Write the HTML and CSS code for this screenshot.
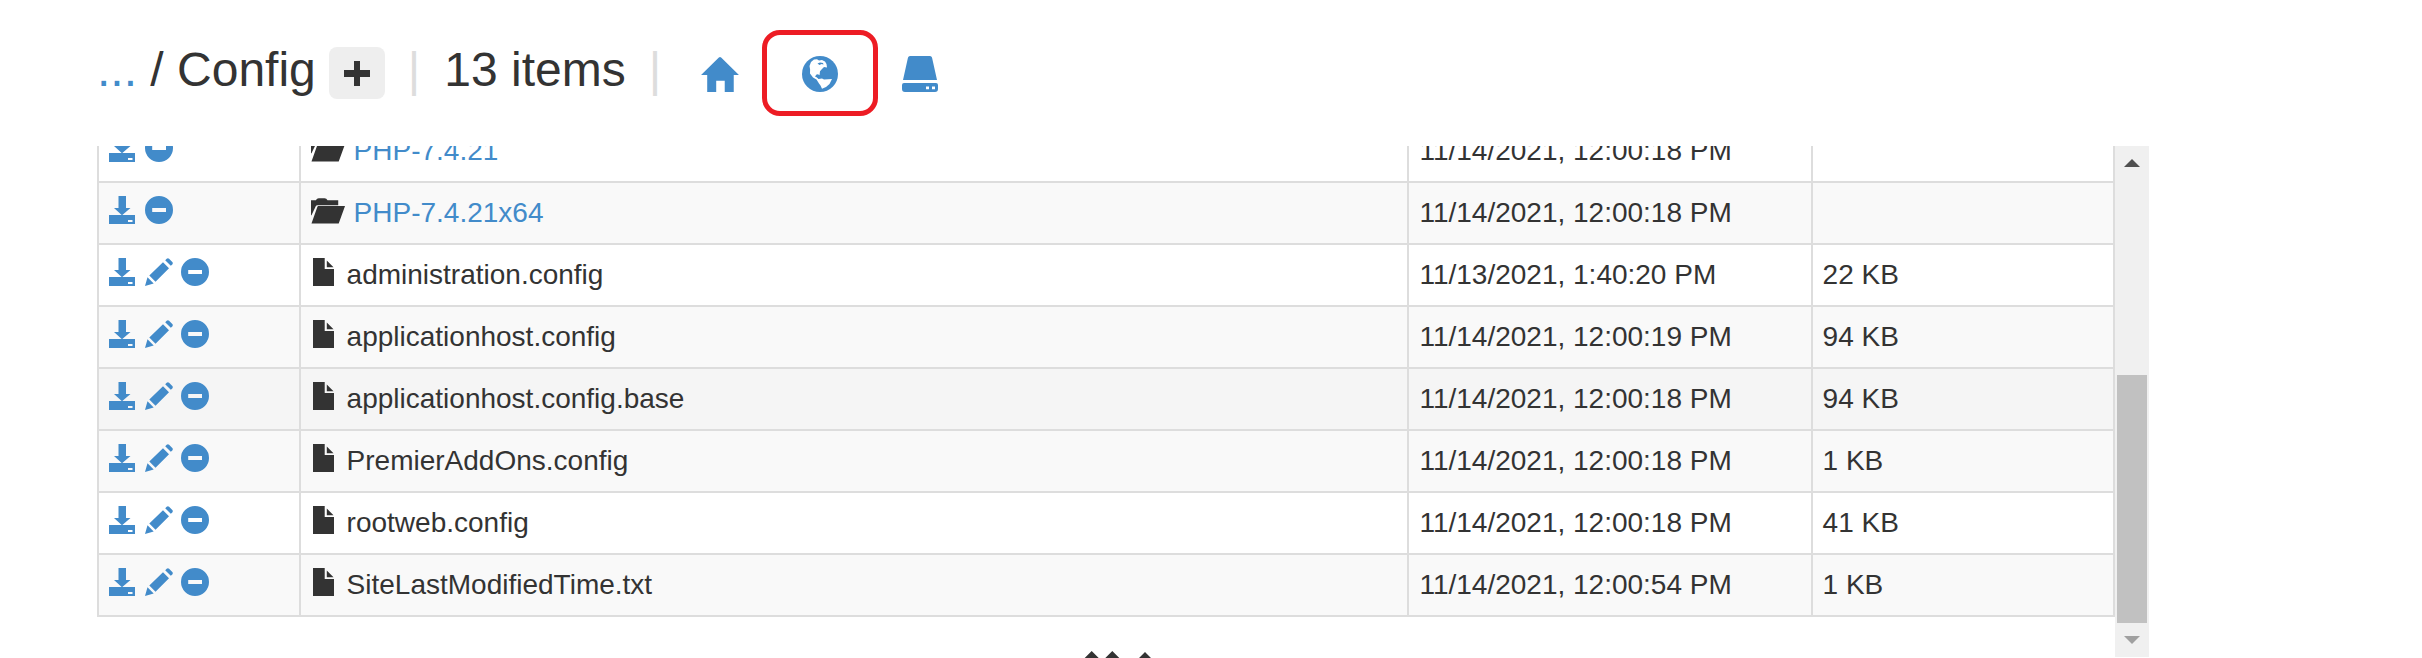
FILE: index.html
```
<!DOCTYPE html>
<html lang="en">
<head>
    <meta charset="UTF-8">
    <meta name="viewport" content="width=device-width, initial-scale=1.0">
    <title>Config</title>
    <link rel="stylesheet" href="styles.css">
</head>
<body>
    <svg class="sprite" aria-hidden="true">
        <symbol id="save" viewBox="0 0 28 28">
            <path fill-rule="evenodd" d="M9.5 0h7.5v12h4.5L13.3 19H26v9H0v-9h12.7L5 12h4.500zM19 24v2h4.500v-2z"/>
        </symbol>
        <symbol id="pencil" viewBox="0 0 28 28">
            <path d="M18 4.200l6 6L10.500 23.700l-6.200-6.200zM2.500 19.200l6.200 6.200L0 28zM20.200 2.200L21.700.8q1.200-1 2.400 0l3.200 3.200q1 1.200 0 2.400L25.800 7.800z"/>
        </symbol>
        <symbol id="minus" viewBox="0 0 28 28">
            <path fill-rule="evenodd" d="M14 0a14 14 0 1 1 0 28a14 14 0 1 1 0-28zM7.200 12v4H21v-4z"/>
        </symbol>
        <symbol id="folder" viewBox="0 0 36 28">
            <path d="M0 4h5q1-2 3-2h6q2 0 3 2h11v5H6.500q-1 0-1.500 1L.5 19.500H0zM7.500 10H35l-6.500 18H.5L6.500 11q.4-1 1-1z"/>
        </symbol>
        <symbol id="file" viewBox="0 0 28 28">
            <path d="M2 0h11.700v11H23v17H2zM15.800 2.500l6.700 6.700h-6.700z"/>
        </symbol>
        <symbol id="plus" viewBox="0 0 28 28">
            <path d="M11 2h6v9h10v7H17v9h-6v-9H1v-7h10z"/>
        </symbol>
        <symbol id="home" viewBox="0 0 40 38">
            <path d="M18.800 1.500q1.200-1 2.400 0L40 20h-5.500v18H25V26h-9v12H6.500V20H0z"/>
        </symbol>
        <symbol id="globe" viewBox="0 0 36 36">
            <circle cx="18" cy="18" r="18"/>
            <path class="land" d="M7.500 10L9 6l3-2.500 3-.3 2 1.300 3-.5 3 1.500L24.500 8l.5 3.500-3-.5-2.500 2.500-1.500 1.700-.5 4-1.500-1-1.500.3-1.500 2 2 1 1.500 1.500 3.500-.5 2 1 8-.5-2.500 5-3.500 3-4 1.800-1.500-3.300-1.500-2-2.500-4-3.500-2-3-4 .1-4z"/>
            <path d="M15.500 7.500l2.500-1 3 .5.500 1.500-2-.5-2 1zM15 19l1.500 1 .3 2.500-1.500-1z"/>
        </symbol>
        <symbol id="drive" viewBox="0 0 36 36">
            <path fill-rule="evenodd" d="M8 0h20q1.500 0 2 1.500L35 24H1L6 1.500Q6.500 0 8 0zM2 27h32q2 0 2 2v4q0 3-3 3H3q-3 0-3-3v-4q0-2 2-2zM24 30.500v2.700h3v-2.700zM30 30.500v2.700h3v-2.700z"/>
        </symbol>
        <symbol id="down" viewBox="0 0 36 28">
            <path d="M7.700 0L18 10.300 28.300 0 36 7.700 18 25.700 0 7.700z"/>
        </symbol>
        <symbol id="up" viewBox="0 0 36 28">
            <path d="M18 1l18 18-7.700 7.700L18 16.400 7.700 26.700 0 19z"/>
        </symbol>
    </svg>

    <header class="top">
        <h1 class="path"><a href="#">...</a> / Config</h1>
        <button class="add" type="button" aria-label="New"><svg><use href="#plus"/></svg></button>
        <span class="bar">|</span>
        <span class="count">13 items</span>
        <span class="bar">|</span>
        <nav class="places">
            <a href="#" aria-label="Home"><svg class="icon-home"><use href="#home"/></svg></a>
            <a href="#" class="marked" aria-label="Site root"><svg><use href="#globe"/></svg></a>
            <a href="#" aria-label="Drive"><svg><use href="#drive"/></svg></a>
        </nav>
    </header>

    <main class="pane">
        <div class="content">
            <div class="list">
                <table class="files">
                    <colgroup>
                        <col class="col-act">
                        <col class="col-name">
                        <col class="col-date">
                        <col class="col-size">
                    </colgroup>
                    <tbody id="rows"></tbody>
                </table>
            </div>
            <div class="resize">
                <button type="button" aria-label="Expand"><svg><use href="#down"/></svg></button>
                <button type="button" aria-label="Collapse"><svg><use href="#up"/></svg></button>
            </div>
        </div>
        <div class="scroll">
            <button class="arrow arrow-up" type="button" aria-label="Scroll up"></button>
            <div class="track"><div class="thumb"></div></div>
            <button class="arrow arrow-down" type="button" aria-label="Scroll down"></button>
        </div>
    </main>

    <script src="script.js"></script>
</body>
</html>
```
FILE: styles.css
```
*{box-sizing: border-box;}
body{
    display: flex;
    flex-direction: column;
    height: 100vh;
    margin: 0;
    padding: 0 273px 0 97px;
    overflow: hidden;
    font: 28px/40px "Liberation Sans", Arial, sans-serif;
    color: #333;
    background: #fff;
}
a{
    color: #428bca;
    text-decoration: none;
}
svg{fill: currentColor;}
button{
    padding: 0;
    border: none;
    color: inherit;
    background: none;
    cursor: pointer;
}
.sprite{
    position: absolute;
    width: 0;
    height: 0;
}

/* header */
.top{
    display: flex;
    flex: none;
    align-items: center;
    height: 146px;
    padding-bottom: 6px;
    font-size: 48px;
    line-height: 52px;
}
.path{
    margin: 0 13px 0 0;
    font-size: 48px;
    font-weight: normal;
}
.add{
    display: flex;
    align-items: center;
    justify-content: center;
    width: 56px;
    height: 52px;
    margin-top: 6px;
    border-radius: 8px;
    background: #eee;
}
.add svg{
    width: 28px;
    height: 28px;
}
.bar{
    margin: 0 24px 0 23px;
    color: #ddd;
}
.places{
    display: flex;
    margin-left: -15px;
}
.places a{
    position: relative;
    display: flex;
    align-items: center;
    justify-content: center;
    width: 100px;
    height: 52px;
    margin-top: 8px;
}
.places svg{
    width: 36px;
    height: 36px;
}
.places .icon-home{
    width: 38px;
}
.marked::after{
    content: "";
    position: absolute;
    inset: -18px -8px -16px;
    border: 5px solid #ed1c24;
    border-radius: 18px;
}
.land{fill: #fff;}

/* file list */
.pane{
    display: flex;
    flex: 1;
    min-height: 0;
}
.content{
    display: flex;
    flex: 1;
    flex-direction: column;
    min-width: 0;
}
.list{
    display: flex;
    flex: 1;
    align-items: flex-end;
    min-height: 0;
    padding-bottom: 34px;
    overflow: hidden;
}
.files{
    width: 100%;
    table-layout: fixed;
    border-collapse: collapse;
}
.files td{
    height: 62px;
    padding: 10px;
    border: 2px solid #ddd;
    white-space: nowrap;
}
.files tr:nth-child(even){background: #f9f9f9;}
.files tr.hover{background: #f5f5f5;}
.col-act{width: 10%;}
.col-name{width: 55%;}
.col-date{width: 20%;}
.col-size{width: 15%;}
.cell{
    display: flex;
    gap: 8px;
    height: 40px;
}
.cell svg{
    display: block;
    width: 28px;
    height: 28px;
    margin-top: 3px;
}
.cell .icon-folder{width: 35px;}

.resize{
    display: flex;
    flex: none;
    justify-content: center;
    gap: 7px;
    height: 7px;
    padding-left: 34px;
    overflow: hidden;
}
.resize button,
.resize svg{
    display: block;
    width: 36px;
    height: 28px;
}

/* scrollbar */
.scroll{
    display: flex;
    flex: none;
    flex-direction: column;
    width: 34px;
    margin-bottom: 1px;
    background: #f0f0f0;
}
.arrow{
    display: flex;
    align-items: center;
    justify-content: center;
    height: 34px;
}
.arrow::before{
    content: "";
    border: 8px solid transparent;
}
.arrow-up::before{
    border-top: none;
    border-bottom-color: #505050;
}
.arrow-down::before{
    border-bottom: none;
    border-top-color: #a0a0a0;
}
.track{
    display: flex;
    flex: 1;
    align-items: flex-end;
    padding: 0 2px;
}
.thumb{
    width: 100%;
    height: 56%;
    background: #c1c1c1;
}
```
FILE: script.js
```
var files = [
    {name: 'PHP-7.4.21', dir: true, date: '11/14/2021, 12:00:18 PM', size: ''},
    {name: 'PHP-7.4.21x64', dir: true, date: '11/14/2021, 12:00:18 PM', size: ''},
    {name: 'administration.config', date: '11/13/2021, 1:40:20 PM', size: '22 KB'},
    {name: 'applicationhost.config', date: '11/14/2021, 12:00:19 PM', size: '94 KB'},
    {name: 'applicationhost.config.base', date: '11/14/2021, 12:00:18 PM', size: '94 KB', hover: true},
    {name: 'PremierAddOns.config', date: '11/14/2021, 12:00:18 PM', size: '1 KB'},
    {name: 'rootweb.config', date: '11/14/2021, 12:00:18 PM', size: '41 KB'},
    {name: 'SiteLastModifiedTime.txt', date: '11/14/2021, 12:00:54 PM', size: '1 KB'}
];

var icon = function(id) {
    return '<svg class="icon-' + id + '"><use href="#' + id + '"/></svg>';
};
var action = function(id, label) {
    return '<a href="#" aria-label="' + label + '">' + icon(id) + '</a>';
};

var html = '';
for(var i=0; i<files.length; i++) {
    var f = files[i];
    html += '<tr' + (f.hover ? ' class="hover"' : '') + '>';
    // folders can't be edited
    html += '<td><div class="cell">' + action('save', 'Download') + (f.dir ? '' : action('pencil', 'Edit')) + action('minus', 'Delete') + '</div></td>';
    html += '<td><div class="cell">' + icon(f.dir ? 'folder' : 'file') + (f.dir ? '<a href="#">' + f.name + '</a>' : '<span>' + f.name + '</span>') + '</div></td>';
    html += '<td>' + f.date + '</td><td>' + f.size + '</td></tr>';
}
document.getElementById('rows').innerHTML = html;
```
